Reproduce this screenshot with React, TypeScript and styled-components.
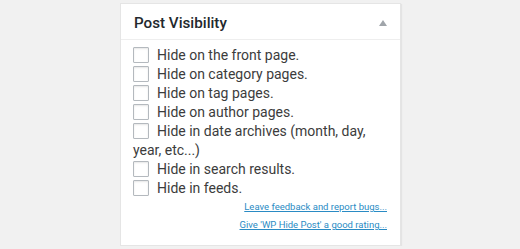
import styled, { createGlobalStyle } from "styled-components";

const Global = createGlobalStyle`
  html, body {
    margin: 0;
    background: #f1f1f1;
    font-family: Roboto, "Liberation Sans", sans-serif;
  }
`;

const Page = styled.div`
  padding: 3px 0 0 120px;
`;

const Box = styled.div`
  width: 279px;
  height: 241px;
  background: #fff;
  border: 1px solid #e5e5e5;
  box-shadow: 1px 1px 1px rgba(0, 0, 0, 0.05);
`;

const Header = styled.div`
  display: flex;
  align-items: center;
  justify-content: space-between;
  height: 32px;
  padding: 3px 13px 0 13px;
  border-bottom: 1px solid #eee;
`;

const Title = styled.h2`
  margin: 0;
  font-size: 15.2px;
  font-weight: 500;
  color: #23282d;
`;

const Toggle = styled.span`
  width: 0;
  height: 0;
  border-left: 4.5px solid transparent;
  border-right: 4.5px solid transparent;
  border-bottom: 6px solid #a0a5aa;
  margin-top: -1px;
`;

const Body = styled.div`
  padding: 6px 12px 0 12px;
`;

const Option = styled.label`
  display: block;
  font-size: 14px;
  line-height: 19px;
  color: #3c3c3c;
`;

const Check = styled.span`
  display: inline-block;
  box-sizing: border-box;
  width: 16px;
  height: 16px;
  margin: 0 8px 0 0;
  border: 1px solid #b4b9be;
  border-radius: 1px;
  background: #fff;
  box-shadow: inset 0 1px 2px rgba(0, 0, 0, 0.1);
  vertical-align: -3px;
`;

const Links = styled.div`
  display: flex;
  flex-direction: column;
  align-items: flex-end;
  gap: 4px;
  margin-top: 2px;
  padding-right: 1px;
`;

const Link = styled.a`
  font-size: 9.5px;
  line-height: 14px;
  color: #2a8bc4;
  text-decoration: underline;
`;

const options = [
  "Hide on the front page.",
  "Hide on category pages.",
  "Hide on tag pages.",
  "Hide on author pages.",
  "Hide in date archives (month, day, year, etc...)",
  "Hide in search results.",
  "Hide in feeds.",
];

export default function App() {
  return (
    <>
      <Global />
      <Page>
        <Box>
          <Header>
            <Title>Post Visibility</Title>
            <Toggle />
          </Header>
          <Body>
            {options.map((o) => (
              <Option key={o}>
                <Check />
                {o}
              </Option>
            ))}
            <Links>
              <Link href="#">Leave feedback and report bugs...</Link>
              <Link href="#">Give 'WP Hide Post' a good rating...</Link>
            </Links>
          </Body>
        </Box>
      </Page>
    </>
  );
}
